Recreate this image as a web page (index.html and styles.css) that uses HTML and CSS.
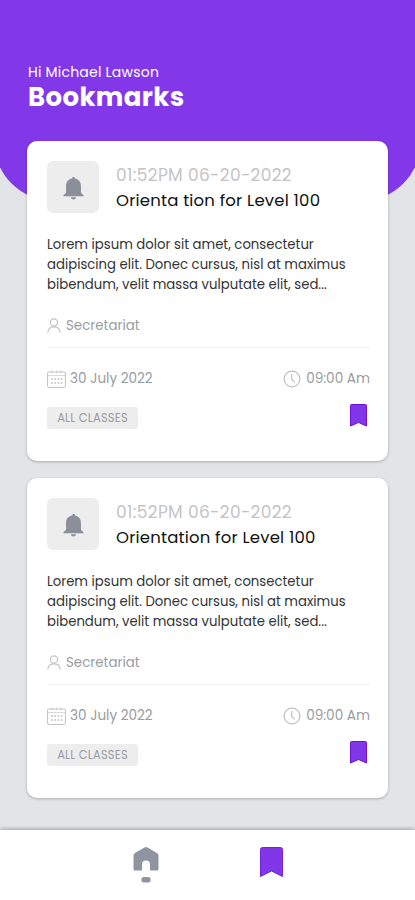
FILE: index.html
```html
<!DOCTYPE html>
<html lang="en">
<head>
<meta charset="utf-8">
<title>Bookmarks</title>
<link rel="stylesheet" href="styles.css">
</head>
<body>
<svg class="defs" width="0" height="0">
<symbol id="bell" viewBox="0 0 22 24"><path d="M11 0c1 0 1.500.7 1.500 1.500C16.600 2.200 18.800 5.400 18.800 9v7.500l2.700 2.500V20H.5v-1L3.200 16.500V9c0-3.600 2.200-6.800 6.300-7.500C9.500.7 10 0 11 0zM8.300 21.200h5.400c-.3 1.500-1.300 2.300-2.700 2.300s-2.400-.8-2.700-2.300z" fill="currentColor"/></symbol>
<symbol id="user" viewBox="0 0 14 15"><g fill="none" stroke="currentColor" stroke-width="1.100"><circle cx="7" cy="4.500" r="3.600"/><path d="M.8 14.500C1.200 10.800 3.800 8.900 7 8.900s5.800 1.900 6.200 5.600"/></g></symbol>
<symbol id="calendar" viewBox="0 0 19 18"><g fill="none" stroke="currentColor"><rect x=".6" y="2" width="17.800" height="15.400" rx="1"/><path d="M.6 5.500h17.800M5 .3v3M9.500.3v3M14 .3v3" stroke-width=".6"/><path d="M4 9h11.500M4 13h11.500" stroke-width="1.400" stroke-dasharray="1.800 1.500"/></g></symbol>
<symbol id="clock" viewBox="0 0 18 18"><g fill="none" stroke="currentColor" stroke-width="1.200"><circle cx="9" cy="9" r="7.900"/><path d="M8.700 4v5.400l3 3"/></g></symbol>
<symbol id="mark" viewBox="0 0 17 23"><path d="M1.500.5h14q1 0 1 1v20.500l-8-3.500-8 3.500v-20.500q0-1 1-1z" fill="#8136e8" stroke="#6d12d4"/></symbol>
<symbol id="mark-large" viewBox="0 0 23 30"><path d="M2.500.5h18q2 0 2 2v27l-11-5.500-11 5.500v-27q0-2 2-2z" fill="#8136e8" stroke="#7422dc"/></symbol>
<symbol id="home" viewBox="0 0 26 36"><path d="M11.500.5q1.500-.8 3 0l9.500 5.500q1.500 1 1.500 2.700V22q0 1.500-1.500 1.500h-7V17q0-3.500-4-3.500T9 17v6.500H2Q.5 23.500.5 22V8.700Q.5 7 2 6z" fill="currentColor"/><rect x="8.500" y="30" width="9" height="5.500" rx="2" fill="currentColor"/></symbol>
</svg>
<div class="app">
<header class="header"><p class="greeting">Hi Michael Lawson</p><h1 class="heading">Bookmarks</h1></header>
<main class="list">
<article class="card">
<div class="top"><div class="thumb"><svg class="bell"><use href="#bell"/></svg></div><div class="summary"><div class="stamp">01:52PM 06-20-2022</div><h2 class="title">Orienta tion for Level 100</h2></div></div>
<p class="text">Lorem ipsum dolor sit amet, consectetur<br>adipiscing elit. Donec cursus, nisl at maximus<br>bibendum, velit massa vulputate elit, sed...</p>
<div class="author"><svg class="user"><use href="#user"/></svg><span>Secretariat</span></div>
<div class="row meta"><div class="item date"><svg class="calendar"><use href="#calendar"/></svg><span>30 July 2022</span></div><div class="item"><svg class="clock"><use href="#clock"/></svg><span>09:00 Am</span></div></div>
<div class="row foot"><span class="tag">ALL CLASSES</span><svg class="mark"><use href="#mark"/></svg></div>
</article>
<article class="card">
<div class="top"><div class="thumb"><svg class="bell"><use href="#bell"/></svg></div><div class="summary"><div class="stamp">01:52PM 06-20-2022</div><h2 class="title">Orientation for Level 100</h2></div></div>
<p class="text">Lorem ipsum dolor sit amet, consectetur<br>adipiscing elit. Donec cursus, nisl at maximus<br>bibendum, velit massa vulputate elit, sed...</p>
<div class="author"><svg class="user"><use href="#user"/></svg><span>Secretariat</span></div>
<div class="row meta"><div class="item date"><svg class="calendar"><use href="#calendar"/></svg><span>30 July 2022</span></div><div class="item"><svg class="clock"><use href="#clock"/></svg><span>09:00 Am</span></div></div>
<div class="row foot"><span class="tag">ALL CLASSES</span><svg class="mark"><use href="#mark"/></svg></div>
</article>
</main>
<nav class="nav"><svg class="home"><use href="#home"/></svg><svg class="mark-large"><use href="#mark-large"/></svg></nav>
</div>
</body>
</html>
```
FILE: styles.css
```css
* { box-sizing: border-box; margin: 0; padding: 0; }
body { width: 415px; height: 900px; overflow: hidden; background: #e2e4e6; font-family: Poppins, Inter, sans-serif; }
.defs { position: absolute; }
svg { display: block; flex: none; }
.app { height: 900px; display: flex; flex-direction: column; }
.header { height: 201px; margin: 0 -6px; padding: 62px 34px 0; background: #8238e9; border-radius: 0 0 60px 60px; color: #fff; flex: none; }
.greeting { font-size: 14px; line-height: 20px; letter-spacing: .22px; }
.heading { font-size: 26px; line-height: 30px; font-weight: 700; letter-spacing: .38px; }
.list { margin: -60px 27px 0; display: flex; flex-direction: column; gap: 17px; position: relative; }
.card { height: 320px; border-radius: 10px; background: #fff; padding: 20px 18px 0 20px; box-shadow: 0 1px 3px rgba(0,0,0,.25); }
.top { display: flex; gap: 17px; height: 52px; }
.thumb { width: 52px; height: 52px; padding: 2px 0 0 1px; border-radius: 6px; background: #ededee; display: flex; align-items: center; justify-content: center; }
.bell { width: 21px; height: 23px; color: #8b8f9a; }
.summary { padding-top: 1px; white-space: nowrap; }
.stamp { color: #c4c4c6; font-size: 17px; line-height: 26px; letter-spacing: .34px; }
.title { color: #111; font-size: 16.500px; line-height: 26px; font-weight: 400; letter-spacing: .2px; }
.text { margin-top: 21px; padding-top: 1px; font-size: 13.250px; line-height: 20px; color: #333; white-space: nowrap; }
.author { height: 53px; padding-top: 9px; display: flex; align-items: center; gap: 5px; color: #999ca1; font-size: 13.400px; border-bottom: 1px solid #f2f2f3; }
.user { width: 14px; height: 15px; color: #c0c1c5; }
.row { display: flex; justify-content: space-between; align-items: center; }
.meta { height: 60px; padding-top: 2px; font-size: 13.600px; color: #999ca1; }
.item { display: flex; align-items: center; gap: 5px; }
.date { gap: 4px; }
.calendar { width: 19px; height: 18px; color: #c0c1c5; }
.clock { width: 18px; height: 18px; color: #c0c1c5; }
.foot { margin-top: -5px; }
.tag { height: 22px; width: 91px; margin-top: 4px; display: flex; align-items: center; justify-content: center; background: #ededee; border-radius: 3px; font-size: 11.500px; letter-spacing: .2px; color: #999ca1; }
.mark { width: 17px; height: 23px; margin: 0 3px 1px 0; }
.nav { position: relative; margin-top: auto; height: 70px; padding: 17px 132px 0 133px; background: #fff; display: flex; justify-content: space-between; box-shadow: 0 -1px 4px rgba(0,0,0,.3); }
.home { width: 26px; height: 36px; color: #9093a0; }
.mark-large { width: 23px; height: 30px; }
```
